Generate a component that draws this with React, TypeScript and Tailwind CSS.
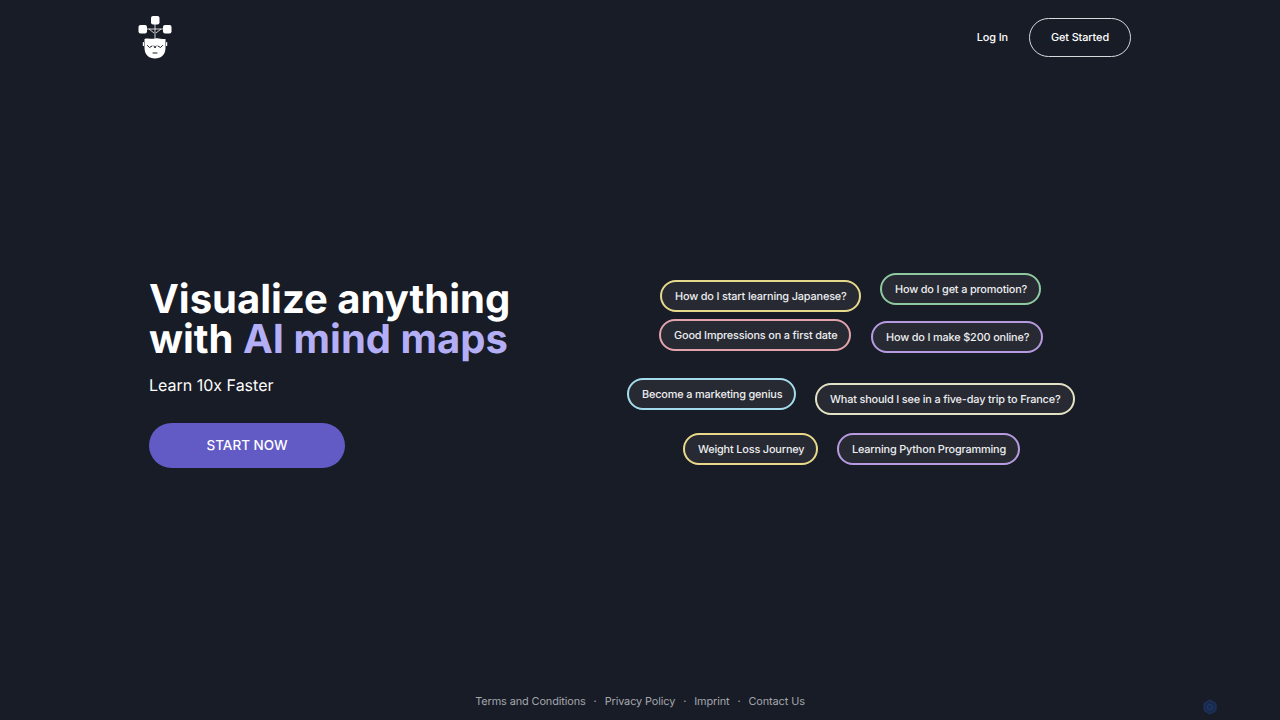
import { Fragment } from 'react';

const chips = [
  { label: 'How do I start learning Japanese?', left: 'left-[660px]', top: 'top-[280px]', border: 'border-[#e6d98c]' },
  { label: 'How do I get a promotion?', left: 'left-[880px]', top: 'top-[273px]', border: 'border-[#8fc9a0]' },
  { label: 'Good Impressions on a first date', left: 'left-[659px]', top: 'top-[319px]', border: 'border-[#e3a3ad]' },
  { label: 'How do I make $200 online?', left: 'left-[871px]', top: 'top-[321px]', border: 'border-[#b79be0]' },
  { label: 'Become a marketing genius', left: 'left-[627px]', top: 'top-[378px]', border: 'border-[#a5dcec]' },
  { label: 'What should I see in a five-day trip to France?', left: 'left-[815px]', top: 'top-[383px]', border: 'border-[#e4e2c4]' },
  { label: 'Weight Loss Journey', left: 'left-[683px]', top: 'top-[433px]', border: 'border-[#ead98a]' },
  { label: 'Learning Python Programming', left: 'left-[837px]', top: 'top-[433px]', border: 'border-[#b79be0]' },
];

const footerLinks = ['Terms and Conditions', 'Privacy Policy', 'Imprint', 'Contact Us'];

function Logo() {
  return (
    <svg width="34" height="44" viewBox="0 0 34 44" fill="none">
      {/* branches */}
      <path d="M17 6V24M6 14H28M11 14L16 18M23 14L18 18" stroke="white" strokeWidth="0.8" />
      {/* nodes */}
      <rect x="13" y="1" width="8.5" height="8.5" rx="2" fill="white" />
      <rect x="0.5" y="10" width="8.5" height="8.5" rx="2" fill="white" />
      <rect x="25" y="10" width="8.5" height="8.5" rx="2" fill="white" />
      {/* head */}
      <path d="M6.5 24C10 22.5 13.5 24.5 17 23.5C20.5 22.5 24 24.5 27.5 24V33C27.5 39.5 23 43.5 17 43.5C11 43.5 6.5 39.5 6.5 33V24Z" fill="white" />
      <rect x="4.8" y="27" width="1.2" height="4" rx="0.6" fill="white" />
      <rect x="28" y="27" width="1.2" height="4" rx="0.6" fill="white" />
      {/* eyes and nose */}
      <path d="M9.5 30.5L11.5 32.5L14 31M20 31L22.5 32.5L24.5 30.5M16 31L17 33L18 31M15 38H19" stroke="#181c26" strokeWidth="1" strokeLinecap="round" strokeLinejoin="round" />
    </svg>
  );
}

export default function App() {
  return (
    <div className="relative flex h-[720px] w-full flex-col overflow-hidden bg-[#181c26] font-['Inter',sans-serif] text-white [text-rendering:geometricPrecision]">
      <header className="flex h-[75px] items-center justify-between pl-[138px] pr-[149px] [font-optical-sizing:none]">
        <div className="-mt-[1px]">
          <Logo />
        </div>
        <div className="flex items-center gap-[21px]">
          <span className="text-[10.9px] font-[450] tracking-[-0.01em]">Log In</span>
          <span className="flex h-[39px] w-[102px] items-center justify-center rounded-full border border-[#d8d9dc] text-[10.9px] font-[450] tracking-[-0.01em]">
            Get Started
          </span>
        </div>
      </header>

      <main className="flex-1 pl-[149px] pt-[204px]">
        <h1 className="text-[40px] font-bold leading-[40px] text-white">
          Visualize anything
          <br />
          with <span className="text-[#b3aef5]">AI mind maps</span>
        </h1>
        <p className="mt-[14px] text-[16px] leading-[24px] [font-optical-sizing:none]">Learn 10x Faster</p>
        <button className="mt-[26px] flex h-[45px] w-[196px] items-center justify-center rounded-full bg-[#625bc6] pb-[1px] text-[13.5px] font-[450] [font-optical-sizing:none]">
          START NOW
        </button>
      </main>

      {chips.map((chip) => (
        <div
          key={chip.label}
          className={`absolute ${chip.left} ${chip.top} flex h-[32px] items-center whitespace-nowrap rounded-full border-2 bg-[#272a33] pl-[13px] pr-[12px] pt-[1px] text-[10.9px] font-[450] tracking-[-0.015em] text-[#eeeef0] [font-optical-sizing:none] ${chip.border}`}
        >
          {chip.label}
        </div>
      ))}

      <footer className="flex h-[38px] items-start justify-center pt-[6px] text-[10.9px] leading-[26px] tracking-[-0.01em] text-[#a3a6ad] [font-optical-sizing:none]">
        {footerLinks.map((link, i) => (
          <Fragment key={link}>
            {i > 0 && <span className="mx-[8px]">·</span>}
            <span>{link}</span>
          </Fragment>
        ))}
      </footer>

      {/* faint badge bottom right */}
      <svg className="absolute left-[1202px] top-[699px]" width="16" height="16" viewBox="0 0 16 16" fill="none">
        <path d="M8 1L14 4.5V11.5L8 15L2 11.5V4.5L8 1Z" fill="#1a2a4a" stroke="#1d3566" />
        <circle cx="8" cy="8" r="2.5" stroke="#1f3c75" />
      </svg>
    </div>
  );
}
